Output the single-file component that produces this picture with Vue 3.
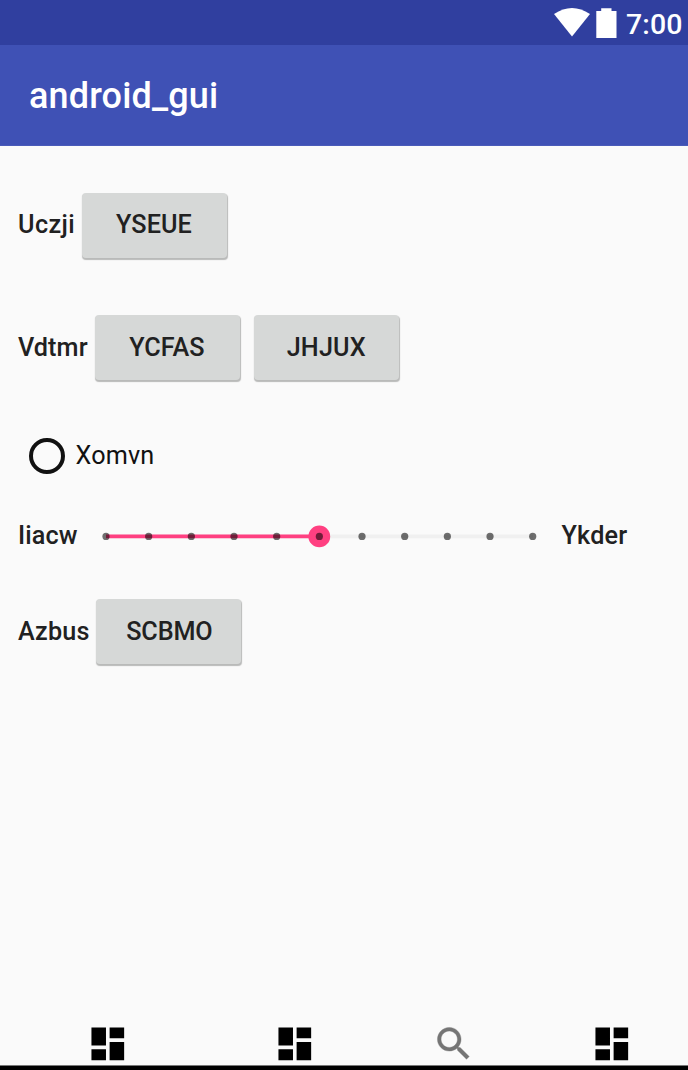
<script setup>
const ticks = Array.from({ length: 11 }, (_, i) => 14 + i * 42.67)
const dashboard = 'M3 13h8V3H3v10zm0 8h8v-6H3v6zm10 0h8V11h-8v10zm0-18v6h8V3h-8z'
</script>

<template>
  <div class="screen">
    <div class="status">
      <svg class="wifi" width="36" height="29" viewBox="0 0 36 29"><path d="M0 6Q18-6 36 6L18 28.5z" fill="#fff" /></svg>
      <svg class="battery" width="21" height="31" viewBox="0 0 21 31"><path d="M0.3 3H5.2V0.2H15.5V3H20.5V30H.3z" fill="#fff" /></svg>
      <span class="time">7:00</span>
    </div>
    <header class="appbar"><h1 class="title">android_gui</h1></header>
    <main class="content">
      <div class="row first">
        <span class="label uczji">Uczji</span>
        <button class="btn"><span class="yseue">YSEUE</span></button>
      </div>
      <div class="row second">
        <span class="label vdtmr">Vdtmr</span>
        <button class="btn"><span class="ycfas">YCFAS</span></button>
        <button class="btn next"><span class="jhjux">JHJUX</span></button>
      </div>
      <div class="row radio-row">
        <span class="radio"></span>
        <span class="radio-text">Xomvn</span>
      </div>
      <div class="row slider-row">
        <span class="label iiacw">Iiacw</span>
        <svg class="slider" width="456" height="30" viewBox="0 0 456 30">
          <path d="M14 15.4H441" stroke="#f0f0f0" stroke-width="3.6" />
          <path d="M14 15.4H227" stroke="#ff4081" stroke-width="3.6" />
          <circle cx="227.3" cy="15.4" r="10.9" fill="#ff4081" />
          <circle v-for="x in ticks" :key="x" :cx="x" cy="15.4" r="3.6" fill="#000" fill-opacity=".56" />
        </svg>
        <span class="label ykder">Ykder</span>
      </div>
      <div class="row last">
        <span class="label azbus">Azbus</span>
        <button class="btn"><span class="scbmo">SCBMO</span></button>
      </div>
    </main>
    <nav class="nav">
      <svg class="icon i1" viewBox="0 0 24 24"><path :d="dashboard" /></svg>
      <svg class="icon i2" viewBox="0 0 24 24"><path :d="dashboard" /></svg>
      <svg class="icon i3" viewBox="0 0 24 24"><path fill="#757575" stroke="#757575" stroke-width=".2" d="M15.5 14h-.79l-.28-.27C15.41 12.59 16 11.11 16 9.5 16 5.91 13.09 3 9.5 3S3 5.91 3 9.5 5.91 16 9.5 16c1.61 0 3.09-.59 4.23-1.57l.27.28v.79l5 4.99L20.49 19l-4.99-5zm-6 0C7.01 14 5 11.99 5 9.5S7.01 5 9.5 5 14 7.01 14 9.5 11.99 14 9.5 14z" /></svg>
      <svg class="icon i4" viewBox="0 0 24 24"><path :d="dashboard" /></svg>
    </nav>
    <div class="bottom"></div>
  </div>
</template>

<style>
body { margin: 0; }
</style>

<style scoped>
.screen { width: 688px; height: 1070px; display: flex; flex-direction: column; overflow: hidden; background: #fafafa; font-family: Roboto, "Liberation Sans", sans-serif; color: #212121; }
.status { height: 45px; flex: none; display: flex; align-items: flex-start; background: #303f9f; color: #fff; }
.wifi { margin: 8px 0 0 554px; }
.battery { margin: 8px 0 0 6px; }
.time { margin: 8px 0 0 9px; font-size: 28.5px; line-height: 33px; font-weight: 500; letter-spacing: 0.1px; white-space: nowrap; }
.appbar { height: 101px; flex: none; display: flex; align-items: center; box-sizing: border-box; padding: 2px 0 0 29px; background: #3f51b5; border-bottom: 1px solid #4a5bb9; }
.title { margin: 0; font-size: 36px; line-height: 42px; font-weight: 500; letter-spacing: 0.15px; color: #fff; white-space: nowrap; }
.content { flex: 1; }
.row { display: flex; align-items: center; padding-left: 18px; white-space: nowrap; }
.first { margin-top: 46.5px; height: 65px; }
.second { margin-top: 57.5px; height: 65px; }
.radio-row { margin-top: 55px; height: 42px; }
.slider-row { margin-top: 44px; height: 30px; }
.last { margin-top: 48px; height: 65px; }
.label { flex: none; font-size: 25.2px; line-height: 30px; font-weight: 500; }
.first .label { padding-bottom: 1px; }
.first .btn { padding-bottom: 1px; }
.uczji { width: 63.5px; letter-spacing: 0.4px; }
.vdtmr { width: 77.4px; letter-spacing: 0.1px; }
.iiacw { width: 74px; letter-spacing: 0.1px; }
.azbus { width: 78.4px; letter-spacing: 0.2px; }
.ykder { margin-left: 13.5px; letter-spacing: 0.2px; }
.btn { flex: none; width: 145px; height: 65px; box-sizing: border-box; padding: 0; border: 0; border-radius: 4px; background: #d6d8d7; box-shadow: 0.5px 1.5px 1px #b9bab9; font: 500 25.2px/30px Roboto, "Liberation Sans", sans-serif; color: #212121; }
.next { margin-left: 13.4px; }
.yseue { letter-spacing: 0.1px; }
.ycfas { margin-right: 2px; }
.jhjux { letter-spacing: 0.2px; }
.scbmo { margin-left: 1px; letter-spacing: -0.1px; }
.radio { width: 36px; height: 36px; box-sizing: border-box; border: 4px solid #111; border-radius: 50%; margin-left: 11px; }
.radio-text { margin-left: 10.5px; font-size: 25.2px; line-height: 30px; letter-spacing: 0.15px; color: #111; }
.nav { height: 45px; flex: none; display: flex; align-items: flex-start; box-sizing: border-box; padding-top: 2.4px; }
.icon { width: 43.6px; height: 43.6px; flex: none; }
.i1 { margin-left: 86.4px; }
.i2 { margin-left: 143.5px; }
.i3 { margin-left: 114.7px; }
.i4 { margin-left: 114.6px; }
.bottom { height: 5px; flex: none; box-sizing: border-box; border-top: 1px solid #777; background: #000; }
</style>
